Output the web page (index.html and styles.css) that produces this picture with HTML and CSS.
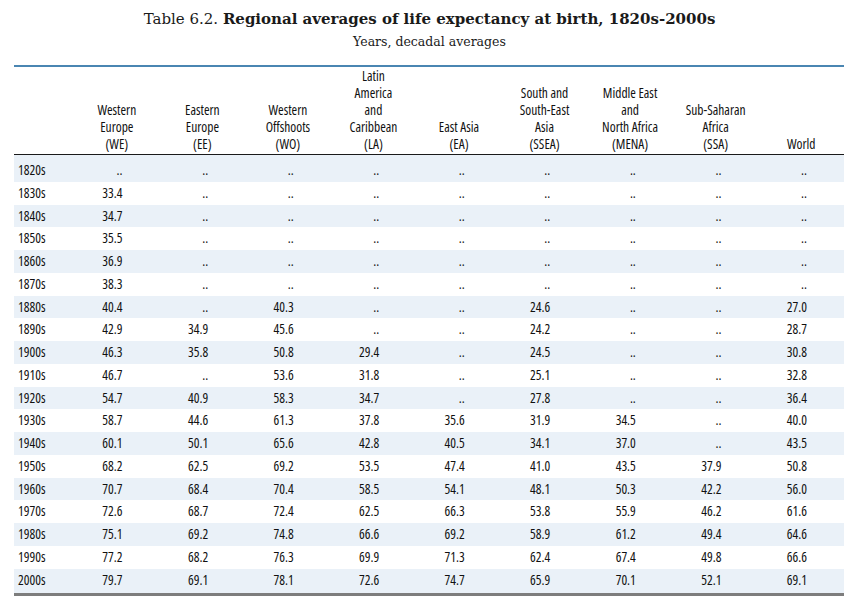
FILE: index.html
```html
<!DOCTYPE html>
<html lang="en">
<head>
<meta charset="utf-8">
<title>Table 6.2</title>
<link rel="stylesheet" href="styles.css">
</head>
<body>
<header class="caption">
  <h1 class="title">Table 6.2. <b>Regional averages of life expectancy at birth, 1820s-2000s</b></h1>
  <p class="subtitle">Years, decadal averages</p>
</header>
<table class="data">
  <colgroup>
    <col class="c-year">
    <col class="c-val"><col class="c-val"><col class="c-val"><col class="c-val"><col class="c-val"><col class="c-val"><col class="c-val"><col class="c-val"><col class="c-val">
  </colgroup>
  <thead>
    <tr>
      <th></th>
      <th>Western<br>Europe<br>(WE)</th>
      <th>Eastern<br>Europe<br>(EE)</th>
      <th>Western<br>Offshoots<br>(WO)</th>
      <th>Latin<br>America<br>and<br>Caribbean<br>(LA)</th>
      <th>East Asia<br>(EA)</th>
      <th>South and<br>South-East<br>Asia<br>(SSEA)</th>
      <th>Middle East<br>and<br>North Africa<br>(MENA)</th>
      <th>Sub-Saharan<br>Africa<br>(SSA)</th>
      <th>World</th>
    </tr>
  </thead>
  <tbody>
    <tr><td>1820s</td><td>..</td><td>..</td><td>..</td><td>..</td><td>..</td><td>..</td><td>..</td><td>..</td><td>..</td></tr>
    <tr><td>1830s</td><td>33.4</td><td>..</td><td>..</td><td>..</td><td>..</td><td>..</td><td>..</td><td>..</td><td>..</td></tr>
    <tr><td>1840s</td><td>34.7</td><td>..</td><td>..</td><td>..</td><td>..</td><td>..</td><td>..</td><td>..</td><td>..</td></tr>
    <tr><td>1850s</td><td>35.5</td><td>..</td><td>..</td><td>..</td><td>..</td><td>..</td><td>..</td><td>..</td><td>..</td></tr>
    <tr><td>1860s</td><td>36.9</td><td>..</td><td>..</td><td>..</td><td>..</td><td>..</td><td>..</td><td>..</td><td>..</td></tr>
    <tr><td>1870s</td><td>38.3</td><td>..</td><td>..</td><td>..</td><td>..</td><td>..</td><td>..</td><td>..</td><td>..</td></tr>
    <tr><td>1880s</td><td>40.4</td><td>..</td><td>40.3</td><td>..</td><td>..</td><td>24.6</td><td>..</td><td>..</td><td>27.0</td></tr>
    <tr><td>1890s</td><td>42.9</td><td>34.9</td><td>45.6</td><td>..</td><td>..</td><td>24.2</td><td>..</td><td>..</td><td>28.7</td></tr>
    <tr><td>1900s</td><td>46.3</td><td>35.8</td><td>50.8</td><td>29.4</td><td>..</td><td>24.5</td><td>..</td><td>..</td><td>30.8</td></tr>
    <tr><td>1910s</td><td>46.7</td><td>..</td><td>53.6</td><td>31.8</td><td>..</td><td>25.1</td><td>..</td><td>..</td><td>32.8</td></tr>
    <tr><td>1920s</td><td>54.7</td><td>40.9</td><td>58.3</td><td>34.7</td><td>..</td><td>27.8</td><td>..</td><td>..</td><td>36.4</td></tr>
    <tr><td>1930s</td><td>58.7</td><td>44.6</td><td>61.3</td><td>37.8</td><td>35.6</td><td>31.9</td><td>34.5</td><td>..</td><td>40.0</td></tr>
    <tr><td>1940s</td><td>60.1</td><td>50.1</td><td>65.6</td><td>42.8</td><td>40.5</td><td>34.1</td><td>37.0</td><td>..</td><td>43.5</td></tr>
    <tr><td>1950s</td><td>68.2</td><td>62.5</td><td>69.2</td><td>53.5</td><td>47.4</td><td>41.0</td><td>43.5</td><td>37.9</td><td>50.8</td></tr>
    <tr><td>1960s</td><td>70.7</td><td>68.4</td><td>70.4</td><td>58.5</td><td>54.1</td><td>48.1</td><td>50.3</td><td>42.2</td><td>56.0</td></tr>
    <tr><td>1970s</td><td>72.6</td><td>68.7</td><td>72.4</td><td>62.5</td><td>66.3</td><td>53.8</td><td>55.9</td><td>46.2</td><td>61.6</td></tr>
    <tr><td>1980s</td><td>75.1</td><td>69.2</td><td>74.8</td><td>66.6</td><td>69.2</td><td>58.9</td><td>61.2</td><td>49.4</td><td>64.6</td></tr>
    <tr><td>1990s</td><td>77.2</td><td>68.2</td><td>76.3</td><td>69.9</td><td>71.3</td><td>62.4</td><td>67.4</td><td>49.8</td><td>66.6</td></tr>
    <tr><td>2000s</td><td>79.7</td><td>69.1</td><td>78.1</td><td>72.6</td><td>74.7</td><td>65.9</td><td>70.1</td><td>52.1</td><td>69.1</td></tr>
  </tbody>
</table>
</body>
</html>
```

FILE: styles.css
```css
html, body {
  margin: 0;
  padding: 0;
  background: #ffffff;
  color: #1a1a1a;
}

.caption {
  text-align: center;
  padding-top: 8px;
  font-family: "DejaVu Serif", "Liberation Serif", serif;
}

.title {
  margin: 0;
  font-size: 15px;
  line-height: 22px;
  font-weight: normal;
}

.title b {
  font-weight: bold;
}

.subtitle {
  margin: 4px 0 0;
  font-size: 12.5px;
  line-height: 16px;
}

.data {
  margin: 15px 0 0 14px;
  width: 830px;
  table-layout: fixed;
  border-collapse: collapse;
  font-family: "Open Sans", "Liberation Sans", sans-serif;
  font-stretch: 77%;
  font-size: 13.5px;
  font-weight: 450;
  color: #111111;
  border-top: 2px solid #4a86b2;
  border-bottom: 3px solid #7d7d7d;
}

.c-year { width: 60px; }
.c-val { width: 85.5px; }

.data th {
  font-weight: 450;
  text-align: center;
  vertical-align: bottom;
  line-height: 17px;
  padding: 1px 0 1px;
  border-bottom: 1px solid #1a1a1a;
}

.data td {
  padding: 0 37px 0 0;
  line-height: 22.75px;
  text-align: right;
  white-space: nowrap;
}

.data td:first-child {
  text-align: left;
  padding: 0 0 0 4px;
}

.data tbody tr:nth-child(odd) {
  background: #eaf1f8;
}

.data tbody tr:first-child td {
  padding-top: 4px;
}

.data tbody tr:last-child td {
  padding-bottom: 2px;
}
```
